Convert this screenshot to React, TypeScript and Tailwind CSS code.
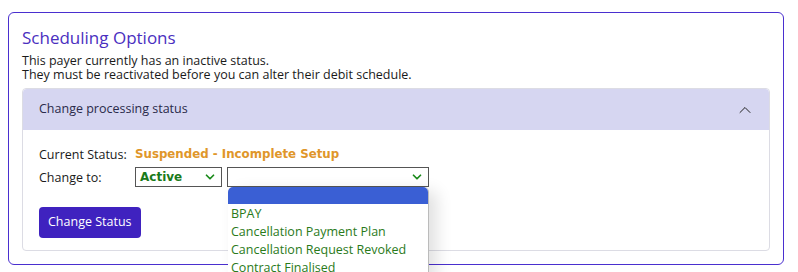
import { ChevronUp, ChevronDown } from 'lucide-react'

const OPTIONS = [
  'BPAY',
  'Cancellation Payment Plan',
  'Cancellation Request Revoked',
  'Contract Finalised',
]

export default function App() {
  return (
    <div className="w-[798px] h-[272px] overflow-hidden bg-white pl-2 pt-3 font-['Open_Sans',sans-serif] text-[12.5px] text-[#1a1a1a]">
      <div className="w-[776px] h-[253px] rounded-[6px] border border-[#4a2fcf] px-[13px] pt-[13px]">
        <h2 className="text-[17px] leading-[24px] font-medium text-[#4a2fc0]">Scheduling Options</h2>
        <p className="leading-[14px] mt-[4px]">
          This payer currently has an inactive status.
          <br />
          They must be reactivated before you can alter their debit schedule.
        </p>

        {/* Accordion */}
        <div className="mt-[6px] rounded-[4px] border border-[#dcdce4]">
          <div className="h-[41px] flex items-center justify-between rounded-t-[4px] bg-[#d6d6f1] pl-4 pr-[14px] text-[#2a2a4a]">
            <span>Change processing status</span>
            <ChevronUp className="w-[20px] h-[20px] text-[#222]" strokeWidth={1.2} />
          </div>

          <div className="h-[120px] px-4 pt-[17px]">
            <div className="flex items-center h-[16px]">
              <span className="w-[96px]">Current Status:</span>
              <span className="font-['DejaVu_Sans',sans-serif] font-bold text-[11.8px] text-[#e0962a]">
                Suspended - Incomplete Setup
              </span>
            </div>

            <div className="flex items-start mt-[4px]">
              <span className="w-[96px] leading-[22px]">Change to:</span>
              <div className="w-[87px] h-[20px] border border-[#555] flex items-center justify-between pl-[4px] pr-[4px]">
                <span className="font-['DejaVu_Sans',sans-serif] font-bold text-[12px] text-[#1a7a1a]">Active</span>
                <ChevronDown className="w-[14px] h-[14px] text-[#1a8a1a]" strokeWidth={3} />
              </div>

              <div className="relative ml-[5px]">
                <div className="w-[202px] h-[20px] border border-[#555] flex items-center justify-end pr-[4px]">
                  <ChevronDown className="w-[14px] h-[14px] text-[#1a8a1a]" strokeWidth={3} />
                </div>

                {/* Open list */}
                <div className="absolute left-[1px] top-[20px] z-10 w-[201px] bg-white rounded-t-[5px] shadow-[8px_4px_16px_rgba(0,0,0,0.12)] border-r border-[#bbb]">
                  <div className="h-[17px] rounded-t-[5px] bg-[#3a5fd4]" />
                  <ul className="pt-[1px]">
                    {OPTIONS.map((o) => (
                      <li key={o} className="h-[18px] leading-[18px] px-[3px] text-[#2a7a1a]">
                        {o}
                      </li>
                    ))}
                  </ul>
                </div>
              </div>
            </div>

            <button className="mt-[18px] h-[31px] px-[9px] rounded-[4px] bg-[#3f22bf] text-white">
              Change Status
            </button>
          </div>
        </div>
      </div>
    </div>
  )
}
